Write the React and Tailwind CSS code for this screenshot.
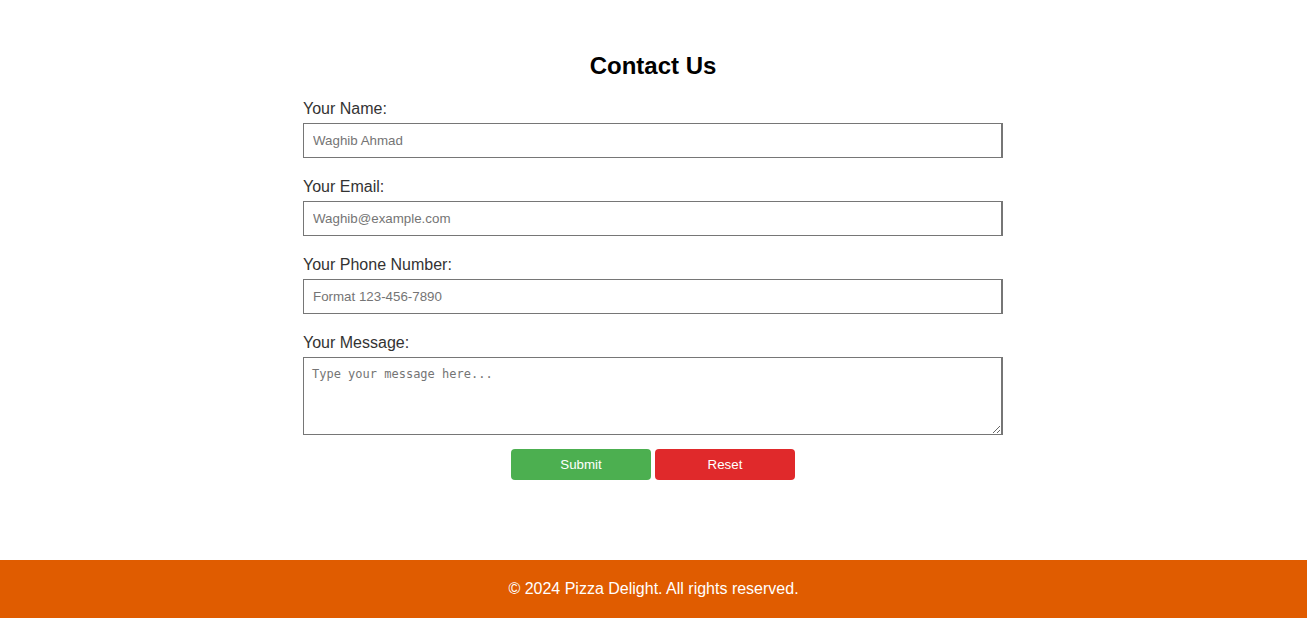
const fields = [
  { label: "Your Name:", type: "text", placeholder: "Waghib Ahmad" },
  { label: "Your Email:", type: "email", placeholder: "Waghib@example.com" },
  { label: "Your Phone Number:", type: "tel", placeholder: "Format 123-456-7890" },
];

const App = () => {
  return (
    <div className="font-['Liberation_Sans',Arial,sans-serif] bg-white min-h-[618px] flex flex-col">
      <main className="h-[560px]">
        <div className="w-[701px] mx-auto pt-[52px]">
          <form className="w-[700px]" onSubmit={(e) => e.preventDefault()}>
            <h2 className="text-[24px] leading-[28px] font-bold text-black text-center mb-[20px]">
              Contact Us
            </h2>

            {fields.map((item) => (
              <div key={item.label}>
                <label className="block text-[16px] leading-[18px] text-[#333] mb-[5px]">
                  {item.label}
                </label>
                <input
                  type={item.type}
                  placeholder={item.placeholder}
                  className="block w-[700px] h-[35px] mb-[20px] px-[9px] border border-[#767676] border-r-2 text-[13.33px] text-black placeholder:text-[#757575] outline-none"
                />
              </div>
            ))}

            <label className="block text-[16px] leading-[18px] text-[#333] mb-[5px]">
              Your Message:
            </label>
            <textarea
              placeholder="Type your message here..."
              className="block w-[700px] h-[78px] px-[8px] pt-[9px] pb-[8px] border border-[#767676] border-r-2 font-['DejaVu_Sans_Mono',monospace] text-[12px] leading-[15px] placeholder:text-[#757575] outline-none resize-y"
            />

            <div className="flex justify-center gap-[4px] mt-[14px]">
              <button type="submit" className="w-[140px] h-[31px] rounded-[4px] bg-[#4caf50] text-white text-[13.33px]">
                Submit
              </button>
              <button type="reset" className="w-[140px] h-[31px] rounded-[4px] bg-[#e0292b] text-white text-[13.33px]">
                Reset
              </button>
            </div>
          </form>
        </div>
      </main>

      <footer className="h-[58px] bg-[#e05c00] flex items-center justify-center">
        <p className="text-white text-[16px]">© 2024 Pizza Delight. All rights reserved.</p>
      </footer>
    </div>
  );
};

export default App;
